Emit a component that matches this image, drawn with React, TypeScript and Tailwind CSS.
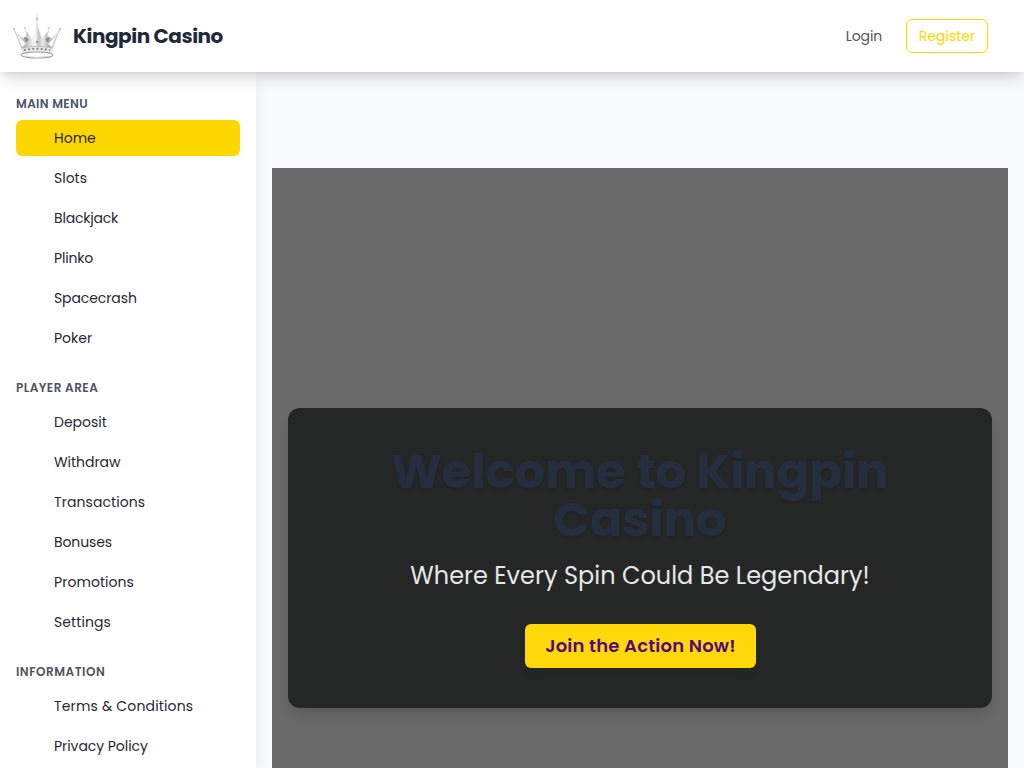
import React from "react";

type Item = { label: string; tracking: string };
type Group = { title: string; tracking: string; items: Item[] };

const groups: Group[] = [
  {
    title: "MAIN MENU",
    tracking: "tracking-[0.35px]",
    items: [
      { label: "Home", tracking: "tracking-normal" },
      { label: "Slots", tracking: "tracking-normal" },
      { label: "Blackjack", tracking: "tracking-[-0.2px]" },
      { label: "Plinko", tracking: "tracking-[-0.2px]" },
      { label: "Spacecrash", tracking: "tracking-[-0.1px]" },
      { label: "Poker", tracking: "tracking-normal" },
    ],
  },
  {
    title: "PLAYER AREA",
    tracking: "tracking-[0.45px]",
    items: [
      { label: "Deposit", tracking: "tracking-normal" },
      { label: "Withdraw", tracking: "tracking-[-0.05px]" },
      { label: "Transactions", tracking: "tracking-[0.08px]" },
      { label: "Bonuses", tracking: "tracking-[-0.1px]" },
      { label: "Promotions", tracking: "tracking-[0.05px]" },
      { label: "Settings", tracking: "tracking-[0.08px]" },
    ],
  },
  {
    title: "INFORMATION",
    tracking: "tracking-[0.52px]",
    items: [
      { label: "Terms & Conditions", tracking: "tracking-[0.16px]" },
      { label: "Privacy Policy", tracking: "tracking-[-0.05px]" },
    ],
  },
];

function Crown() {
  return (
    <svg viewBox="0 0 48 48" className="h-12 w-12 shrink-0" fill="none">
      <defs>
        <linearGradient id="silver" x1="0" x2="1" y1="0" y2="0">
          <stop offset="0" stopColor="#dedede" />
          <stop offset=".22" stopColor="#a8a8a8" />
          <stop offset=".38" stopColor="#e6e6e6" />
          <stop offset=".46" stopColor="#fafafa" />
          <stop offset=".54" stopColor="#b8b8b8" />
          <stop offset=".64" stopColor="#e4e4e4" />
          <stop offset=".78" stopColor="#a0a0a0" />
          <stop offset="1" stopColor="#dedede" />
        </linearGradient>
      </defs>
      <path
        d="M8.500 38 3 20.500 12.500 29 14 19.500 18.500 27Q22 20 24 10Q26 20 29.500 27L34 19.500 35.500 29 45 20.500 39.500 38Q24 34 8.500 38Z"
        fill="url(#silver)"
        fillOpacity=".85"
      />
      <path d="M8.500 35 4.500 23 13 32ZM39.500 35 43.500 23 35 32Z" fill="#fafafa" />
      <path d="M.500 16 9 36M47.500 16 39 36" stroke="#c4c4c4" strokeWidth=".9" />
      <path d="M10 26 13 24.500 16 28 13 30ZM38 26 35 24.500 32 28 35 30Z" fill="#808080" fillOpacity=".8" />
      <path d="M12.500 18 14 26M35.500 18 34 26" stroke="#cfcfcf" strokeWidth=".8" />
      <path d="M24 2V13M22.300 5.500H25.700" stroke="#e0e0e0" strokeWidth="1" />
      <circle cx="24" cy="7.500" r="1.500" fill="#cfcfcf" />
      <circle cx="12" cy="16" r=".9" fill="#bcbcbc" />
      <circle cx="36" cy="16" r=".9" fill="#bcbcbc" />
      <circle cx="1" cy="17" r=".9" fill="#bbb" />
      <circle cx="47" cy="17" r=".9" fill="#bbb" />
      <circle cx="24" cy="30" r="1.300" fill="#949494" />
      <path d="M8.500 36Q24 32.500 39.500 36L39 42Q24 38 9 42Z" fill="#e6e6e6" />
      <path d="M9 36Q24 32.500 39 36" stroke="#b4b4b4" strokeWidth=".8" />
      <path d="M11 38Q24 35.500 37 38" stroke="#808080" strokeWidth="1.900" strokeDasharray="1.800 2.400" />
      <ellipse cx="24" cy="43" rx="15.800" ry="3" fill="#fdfdfd" stroke="#a4a4a4" strokeWidth="1.100" />
      <path d="M12 44Q24 47 36 44" stroke="#d4d4d4" strokeWidth=".7" />
    </svg>
  );
}

export default function App() {
  return (
    <div className="flex h-screen flex-col overflow-hidden bg-[#f9fafb] font-['Poppins','Inter',sans-serif] text-[#1f2937]">
      <header className="relative z-20 flex h-[72px] shrink-0 items-center justify-between bg-white pr-9 pl-[13px] shadow-[0_10px_15px_-3px_rgba(0,0,0,0.13),0_4px_6px_-2px_rgba(0,0,0,0.07)]">
        <div className="flex items-center gap-3">
          <Crown />
          <span className="text-xl font-bold tracking-[-0.45px] whitespace-nowrap">Kingpin Casino</span>
        </div>
        <nav className="flex items-center gap-6 text-sm">
          <a className="tracking-[-0.15px] text-[#4b5563]">Login</a>
          <a className="flex h-[34px] w-[82px] items-center justify-center rounded-md border border-[#ffd700] text-[#ffd700]">
            Register
          </a>
        </nav>
      </header>
      <div className="flex min-h-0 flex-1">
        <aside className="relative z-10 w-64 shrink-0 overflow-hidden bg-white px-4 pt-6 shadow-lg">
          {groups.map((g) => (
            <section key={g.title} className="mb-6">
              <h2 className={`mb-2 text-xs leading-4 font-semibold text-[#4b5563] ${g.tracking}`}>{g.title}</h2>
              <ul className="space-y-1">
                {g.items.map((item) => (
                  <li
                    key={item.label}
                    className={`flex h-9 items-center rounded-md pl-[38px] text-sm ${
                      item.label === "Home" ? "bg-[#ffd700]" : ""
                    }`}
                  >
                    <span className={item.tracking}>{item.label}</span>
                  </li>
                ))}
              </ul>
            </section>
          ))}
        </aside>
        <main className="min-w-0 flex-1 overflow-hidden px-4 pt-24">
          <section className="flex h-[780px] items-center bg-[#696969] px-4">
            <div className="flex h-[300px] w-full flex-col items-center rounded-xl bg-[#252726] py-10 text-center shadow-lg">
              <h1 className="max-w-[640px] text-5xl leading-none font-bold tracking-[0.06px] text-[#252e3e] [text-shadow:0_2px_3px_rgba(0,0,0,0.1)]">
                Welcome to Kingpin Casino
              </h1>
              <p className="mt-4 text-2xl leading-8 tracking-[0.01px] whitespace-nowrap text-[#e5e7eb]">
                Where Every Spin Could Be Legendary!
              </p>
              <button className="mt-8 h-11 w-[231px] rounded-md bg-[#ffd80a] pl-px text-lg font-semibold tracking-[0.18px] whitespace-nowrap text-[#520a80] shadow-[0_8px_12px_-3px_rgba(0,0,0,0.06)]">
                Join the Action Now!
              </button>
            </div>
          </section>
        </main>
      </div>
    </div>
  );
}
